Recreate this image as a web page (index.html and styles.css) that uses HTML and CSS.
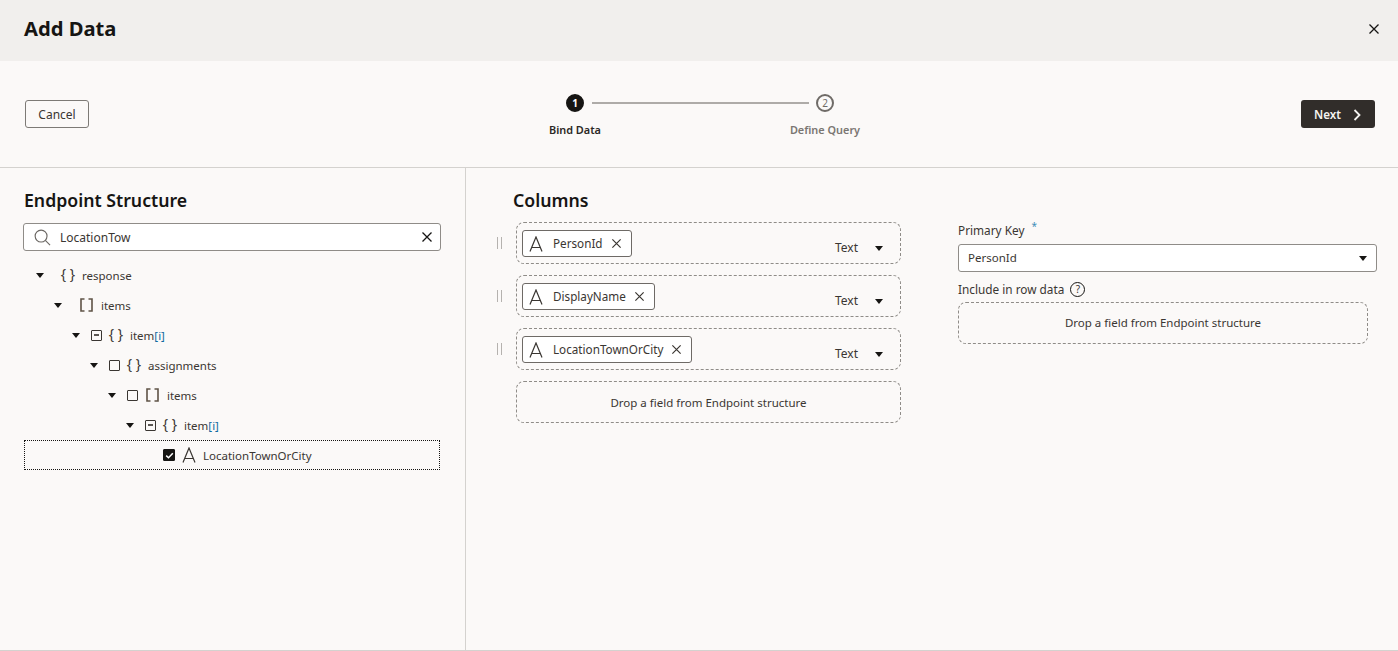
FILE: index.html
```html
<!DOCTYPE html>
<html lang="en">
<head>
<meta charset="utf-8">
<title>Add Data</title>
<link rel="stylesheet" href="styles.css">
</head>
<body>
<svg class="defs" width="0" height="0" aria-hidden="true">
  <symbol id="i-a" viewBox="0 0 14 16"><path d="M1 15.5 L7 1 L13 15.5 M3 11.5 H11" fill="none" stroke="currentColor" stroke-width="1.2"/></symbol>
  <symbol id="i-x" viewBox="0 0 12 12"><path d="M1.5 1.5 L10.5 10.5 M10.5 1.5 L1.5 10.5" fill="none" stroke="currentColor" stroke-width="1.3"/></symbol>
  <symbol id="i-br" viewBox="0 0 13 14"><path d="M4.5 1 H1 V13 H4.5 M8.5 1 H12 V13 H8.5" fill="none" stroke="#5f5346" stroke-width="1.6"/></symbol>
</svg>
<div class="page">
  <header class="titlebar">
    <h1 class="title">Add Data</h1>
    <svg class="close"><use href="#i-x"/></svg>
  </header>
  <section class="toolbar">
    <div class="side"><button class="btn">Cancel</button></div>
    <div class="stepper">
      <div class="track">
        <span class="dot dot-on">1</span>
        <span class="line"></span>
        <span class="dot">2</span>
      </div>
      <span class="step step-on">Bind Data</span>
      <span></span>
      <span class="step">Define Query</span>
    </div>
    <div class="side side-end"><button class="btn-next">Next<svg class="chev" viewBox="0 0 8 12"><path d="M1.5 1 L6.5 6 L1.5 11" fill="none" stroke="currentColor" stroke-width="1.8"/></svg></button></div>
  </section>
  <main class="body">
    <aside class="left">
      <h2 class="heading">Endpoint Structure</h2>
      <div class="search">
        <svg class="mag" viewBox="0 0 18 18"><circle cx="7.5" cy="7.5" r="6.3" fill="none" stroke="#6b6763" stroke-width="1.2"/><path d="M12 12 L17 17" stroke="#6b6763" stroke-width="1.2"/></svg>
        <span class="search-text">LocationTow</span>
        <svg class="search-x"><use href="#i-x"/></svg>
      </div>
      <div class="tree">
        <div class="row lv0"><i class="caret"></i><i class="nocb"></i><span class="brace">{ }</span><span class="name">response</span></div>
        <div class="row lv1"><i class="caret"></i><i class="nocb"></i><svg class="ic-br"><use href="#i-br"/></svg><span class="name">items</span></div>
        <div class="row lv2"><i class="caret"></i><i class="cb cb-part"></i><span class="brace">{ }</span><span class="name">item<b class="idx">[i]</b></span></div>
        <div class="row lv3"><i class="caret"></i><i class="cb"></i><span class="brace">{ }</span><span class="name">assignments</span></div>
        <div class="row lv4"><i class="caret"></i><i class="cb"></i><svg class="ic-br"><use href="#i-br"/></svg><span class="name">items</span></div>
        <div class="row lv5"><i class="caret"></i><i class="cb cb-part"></i><span class="brace">{ }</span><span class="name">item<b class="idx">[i]</b></span></div>
        <div class="row lv6 row-sel"><i class="cb cb-on"><svg viewBox="0 0 11 11"><path d="M2.2 5.6 L4.5 7.8 L8.8 3.2" fill="none" stroke="#fff" stroke-width="1.5"/></svg></i><svg class="ic-a"><use href="#i-a"/></svg><span class="name">LocationTownOrCity</span></div>
      </div>
    </aside>
    <section class="main">
      <div class="cols">
        <h2 class="heading heading-cols">Columns</h2>
        <div class="col-row">
          <span class="grip"></span>
          <div class="slot">
            <span class="chip"><svg class="ic-a"><use href="#i-a"/></svg><span class="chip-text">PersonId</span><svg class="chip-x"><use href="#i-x"/></svg></span>
            <span class="type">Text<i class="caret"></i></span>
          </div>
        </div>
        <div class="col-row">
          <span class="grip"></span>
          <div class="slot">
            <span class="chip"><svg class="ic-a"><use href="#i-a"/></svg><span class="chip-text">DisplayName</span><svg class="chip-x"><use href="#i-x"/></svg></span>
            <span class="type">Text<i class="caret"></i></span>
          </div>
        </div>
        <div class="col-row">
          <span class="grip"></span>
          <div class="slot">
            <span class="chip"><svg class="ic-a"><use href="#i-a"/></svg><span class="chip-text">LocationTownOrCity</span><svg class="chip-x"><use href="#i-x"/></svg></span>
            <span class="type">Text<i class="caret"></i></span>
          </div>
        </div>
        <div class="col-row">
          <span class="grip grip-none"></span>
          <div class="drop">Drop a field from Endpoint structure</div>
        </div>
      </div>
      <div class="form">
        <label class="label">Primary Key<span class="req">*</span></label>
        <div class="select"><span>PersonId</span><i class="caret"></i></div>
        <label class="label label-inc">Include in row data<span class="help">?</span></label>
        <div class="drop drop-form">Drop a field from Endpoint structure</div>
      </div>
    </section>
  </main>
</div>
</body>
</html>
```
FILE: styles.css
```css
* { box-sizing: border-box; }
html, body { margin: 0; padding: 0; height: 100%; }
body { background: #fbf9f8; color: #2b2825; font: 11.5px/16px "Noto Sans", "Open Sans", sans-serif; overflow: hidden; }
.defs { position: absolute; }
.page { height: 651px; display: flex; flex-direction: column; border-bottom: 1px solid #d4d2cf; }

.titlebar { height: 61px; flex: none; background: #f1efed; display: flex; align-items: center; justify-content: space-between; padding: 0 18px 6px 24px; }
.title { margin: 0; font-size: 20.2px; line-height: 26px; font-weight: 700; color: #161513; }
.close { width: 12px; height: 12px; color: #161513; margin: 2px 0 0 0; }

.toolbar { height: 107px; flex: none; border-bottom: 1px solid #d4d2cf; display: grid; grid-template-columns: 1fr auto 1fr; align-items: center; padding: 0 23px 0 25px; }
.side-end { display: flex; justify-content: flex-end; }
.btn { width: 64px; height: 28px; padding: 2px 0 0; background: transparent; border: 1px solid #7d7a76; border-radius: 3px; color: #3a3632; font: 12px/16px "Noto Sans", sans-serif; }
.btn-next { width: 74px; height: 28px; padding: 1px 1px 0 0; background: #312d2a; border: 0; border-radius: 3px; color: #f5f3f1; font: 600 11.6px/16px "Noto Sans", sans-serif; display: flex; align-items: center; justify-content: center; gap: 12px; }
.chev { width: 8px; height: 12px; }

.stepper { display: grid; grid-template-columns: 100px 150px 100px; row-gap: 11px; justify-items: center; margin-top: 2px; }
.track { grid-column: 1 / -1; justify-self: stretch; display: flex; align-items: center; padding: 0 41px; }
.dot { width: 18px; height: 18px; flex: none; border-radius: 50%; border: 2px solid #6f6b67; font-size: 10px; line-height: 14px; text-align: center; color: #6f6b67; }
.dot-on { background: #161513; border-color: #161513; color: #fff; font-weight: 700; }
.line { flex: 1; height: 2px; background: #aeaba8; margin: 0 7px 0 8px; }
.step { font-size: 10.9px; line-height: 14px; font-weight: 600; color: #7a7672; white-space: nowrap; }
.step-on { color: #2b2825; }

.body { flex: 1; display: flex; min-height: 0; }
.left { width: 466px; flex: none; border-right: 1px solid #d4d2cf; padding: 20px 24px 0 23px; }
.heading { margin: 0; padding-left: 1px; font-size: 17.7px; line-height: 24px; font-weight: 600; color: #161513; }
.search { margin-top: 11px; height: 28px; background: #fff; border: 1px solid #8f8c88; border-radius: 3px; display: flex; align-items: center; padding: 0 7px 0 10px; }
.mag { width: 17px; height: 17px; margin-right: 9px; }
.search-text { flex: 1; color: #3a3632; font-size: 12px; padding-top: 2px; }
.search-x { width: 12px; height: 12px; color: #161513; }

.tree { margin-top: 9px; }
.row { height: 30px; display: flex; align-items: center; white-space: nowrap; }
.name { padding-top: 2px; color: #3a3632; }
.lv0 { padding-left: 13px; }
.lv1 { padding-left: 31px; }
.lv2 { padding-left: 49px; }
.lv3 { padding-left: 67px; }
.lv4 { padding-left: 85px; }
.lv5 { padding-left: 103px; }
.lv6 { padding-left: 138px; }
.row-sel { margin-left: 1px; width: 416px; border: 1px dotted #161513; }
.caret { width: 0; height: 0; flex: none; border-left: 4.5px solid transparent; border-right: 4.5px solid transparent; border-top: 5px solid #161513; margin-right: 11px; }
.nocb { width: 6px; flex: none; }
.cb { width: 11px; height: 11px; flex: none; margin-right: 7px; border: 1.3px solid #3a3632; border-radius: 1px; display: flex; align-items: center; justify-content: center; }
.cb-part::after { content: ""; width: 5px; height: 1.4px; background: #5a5652; }
.cb-on { background: #161513; border-color: #161513; width: 12px; height: 12px; margin-right: 7px; }
.cb-on svg { width: 11px; height: 11px; flex: none; }
.brace { width: 14px; margin-right: 7px; font-size: 14px; color: #3a3632; white-space: pre; display: flex; justify-content: center; margin-top: -2px; }
.ic-br { width: 13px; height: 14px; margin: -1px 8px 0 1px; flex: none; }
.ic-a { width: 14px; height: 16px; color: #3a3632; flex: none; margin-right: 7px; }
.idx { font-weight: 400; color: #0f6aa0; }

.main { flex: 1; display: flex; gap: 57px; padding: 20px 0 0 31px; }
.cols { width: 404px; flex: none; }
.heading-cols { padding-left: 16px; margin-bottom: 10px; }
.col-row { display: flex; align-items: flex-start; margin-bottom: 11px; }
.grip { width: 19px; flex: none; height: 42px; position: relative; }
.grip::before { content: ""; position: absolute; left: 0; top: 15px; width: 3px; height: 12px; border-left: 1px solid #b5b2af; border-right: 1px solid #b5b2af; }
.grip-none::before { display: none; }
.slot { flex: 1; height: 42px; border: 1px dashed #8f8c88; border-radius: 8px; display: flex; align-items: flex-start; justify-content: space-between; padding: 7px 17px 0 5px; }
.chip { height: 27px; background: #fff; border: 1px solid #6e6a66; border-radius: 3px; display: flex; align-items: center; padding: 0 9px 0 6px; }
.chip .ic-a { margin-right: 10px; }
.chip-text { margin-right: 8px; padding-bottom: 2px; color: #3a3632; font-size: 11.7px; }
.chip-x { width: 11px; height: 11px; color: #3a3632; }
.type { display: flex; align-items: center; margin-top: 10px; color: #3a3632; font-size: 12px; }
.type .caret { margin: 0 0 0 17px; }
.drop { flex: 1; height: 42px; border: 1px dashed #8f8c88; border-radius: 8px; padding-top: 2px; display: flex; align-items: center; justify-content: center; color: #3a3632; font-size: 11.5px; }

.form { width: 419px; flex: none; padding-top: 34px; }
.label { display: flex; align-items: center; height: 16px; color: #3a3632; font-size: 11.8px; }
.req { color: #3f8fb8; font-size: 10px; margin: -9px 0 0 7px; }
.select { margin-top: 6px; height: 28px; background: #fff; border: 1px solid #8f8c88; border-radius: 3px; display: flex; align-items: center; justify-content: space-between; padding: 0 9px; color: #3a3632; }
.select .caret { margin: 0; }
.label-inc { margin-top: 9px; }
.help { width: 15px; height: 15px; margin-left: 6px; border: 1.3px solid #161513; border-radius: 50%; font-size: 10px; line-height: 12px; text-align: center; }
.drop-form { flex: none; width: 410px; margin-top: 5px; padding-top: 0; }
```
